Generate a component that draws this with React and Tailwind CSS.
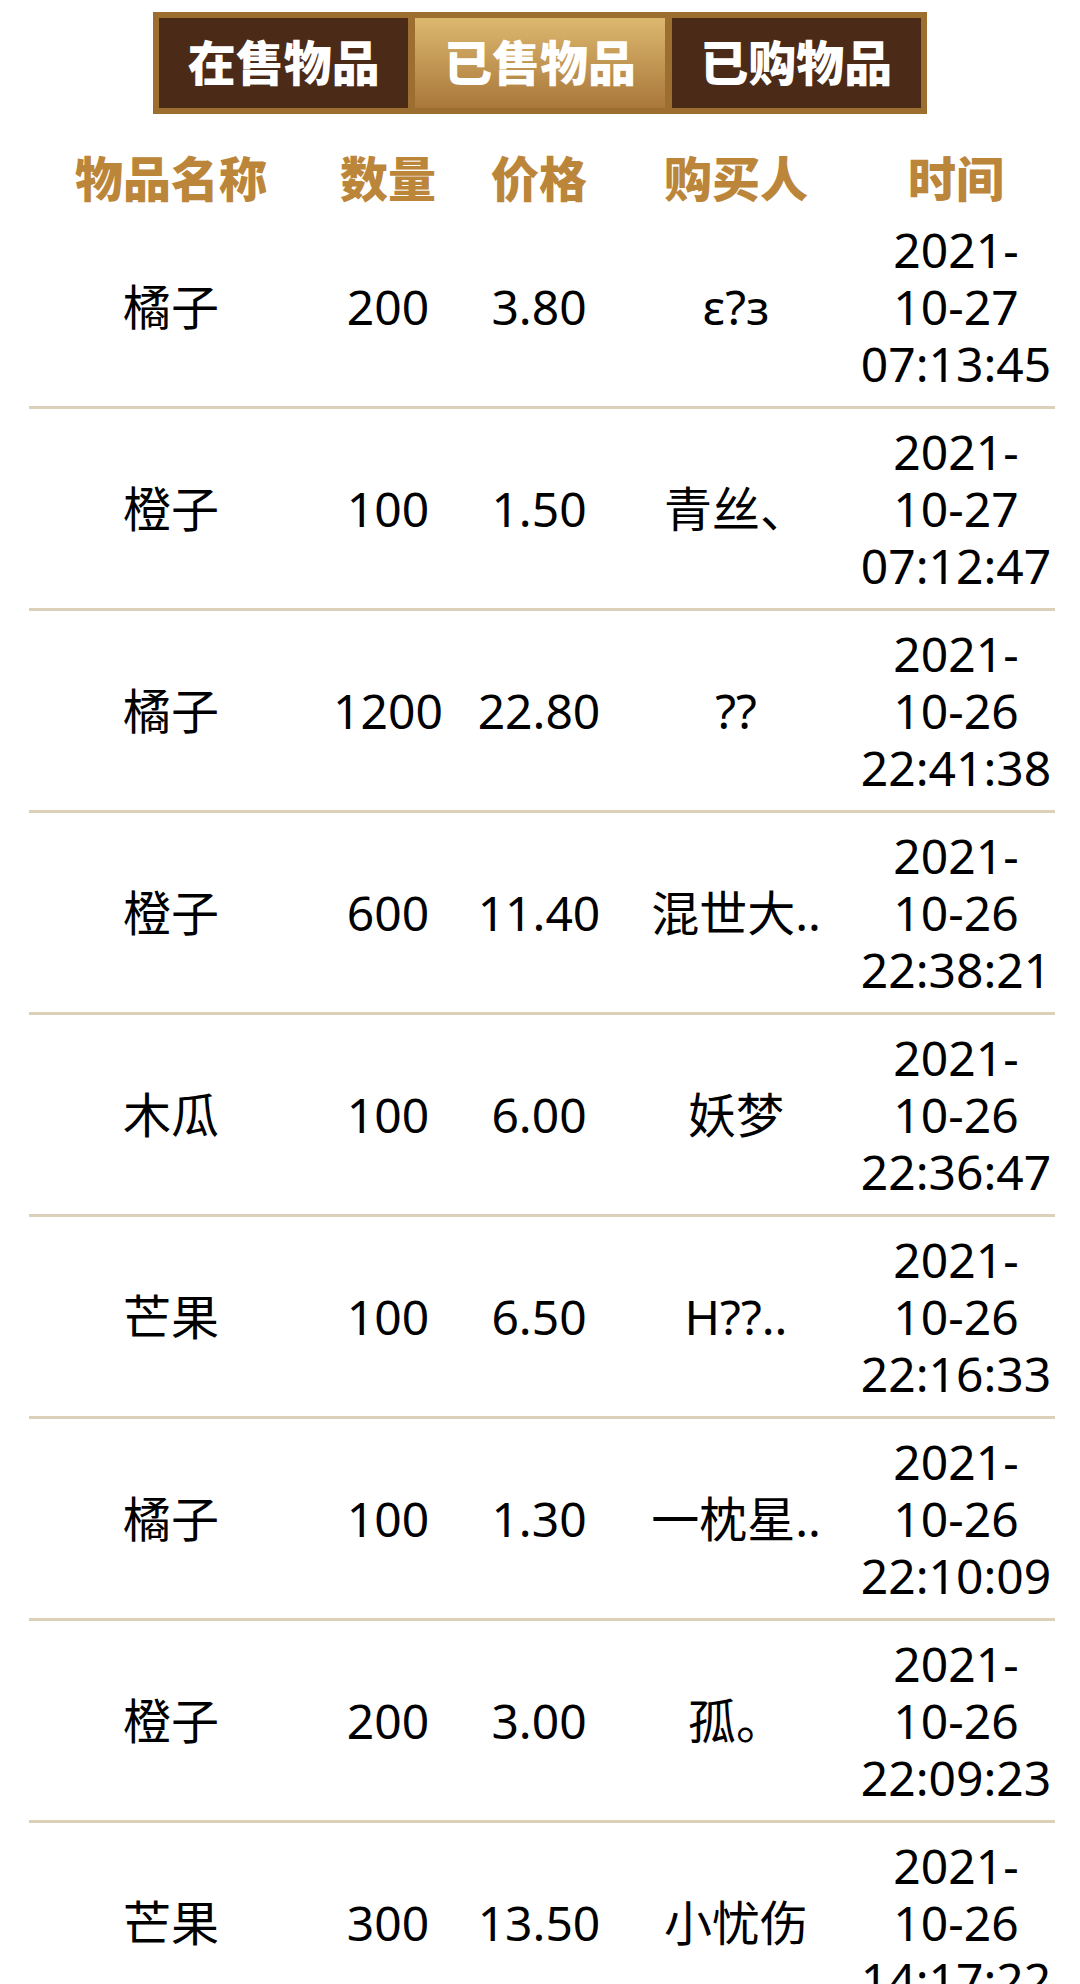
import { useState } from 'react';

const rows = [
  { name: '橘子', qty: '200', price: '3.80', buyer: 'ε?з', date: '2021-', md: '10-27', time: '07:13:45' },
  { name: '橙子', qty: '100', price: '1.50', buyer: '青丝、', date: '2021-', md: '10-27', time: '07:12:47' },
  { name: '橘子', qty: '1200', price: '22.80', buyer: '??', date: '2021-', md: '10-26', time: '22:41:38' },
  { name: '橙子', qty: '600', price: '11.40', buyer: '混世大..', date: '2021-', md: '10-26', time: '22:38:21' },
  { name: '木瓜', qty: '100', price: '6.00', buyer: '妖梦', date: '2021-', md: '10-26', time: '22:36:47' },
  { name: '芒果', qty: '100', price: '6.50', buyer: 'H??..', date: '2021-', md: '10-26', time: '22:16:33' },
  { name: '橘子', qty: '100', price: '1.30', buyer: '一枕星..', date: '2021-', md: '10-26', time: '22:10:09' },
  { name: '橙子', qty: '200', price: '3.00', buyer: '孤。', date: '2021-', md: '10-26', time: '22:09:23' },
  { name: '芒果', qty: '300', price: '13.50', buyer: '小忧伤', date: '2021-', md: '10-26', time: '14:17:22' },
];

const tabs = ['在售物品', '已售物品', '已购物品'];

export default function App() {
  const [active, setActive] = useState(1);
  const cols = 'grid grid-cols-[284px_150px_152px_242px_198px]';

  return (
    <div
      className="h-[1984px] w-[1080px] overflow-hidden bg-white"
      style={{ fontFamily: '"Noto Sans", "Noto Sans CJK SC", sans-serif' }}
    >
      {/* tabs */}
      <div className="flex justify-center pt-[12px]">
        <div className="flex w-[774px] gap-[7px] bg-[#9c6f31] p-[6px]">
          {tabs.map((t, i) => (
            <button
              key={t}
              onClick={() => setActive(i)}
              className={
                i === active
                  ? 'flex h-[90px] flex-1 items-center justify-center bg-gradient-to-b from-[#dcb86f] to-[#a9783a] text-[48px] font-black text-white'
                  : 'flex h-[90px] flex-1 items-center justify-center bg-[#4b2b17] text-[48px] font-black text-white'
              }
            >
              {t}
            </button>
          ))}
        </div>
      </div>

      {/* header */}
      <div className={`${cols} ml-[29px] mt-[36px] h-[57px] items-center text-center text-[48px] font-black leading-[57px] text-[#bb863a]`}>
        <div>物品名称</div>
        <div>数量</div>
        <div>价格</div>
        <div>购买人</div>
        <div>时间</div>
      </div>

      {/* rows */}
      <div className="ml-[29px] w-[1026px]">
        {rows.map((r, i) => (
          <div
            key={i}
            className={`${cols} items-center border-b-[3px] border-[#dcd0bb] py-[14px] text-center text-[48px] leading-[57px] text-black`}
          >
            <div>{r.name}</div>
            <div>{r.qty}</div>
            <div>{r.price}</div>
            <div>{r.buyer}</div>
            <div>
              <div>{r.date}</div>
              <div>{r.md}</div>
              <div>{r.time}</div>
            </div>
          </div>
        ))}
      </div>
    </div>
  );
}
